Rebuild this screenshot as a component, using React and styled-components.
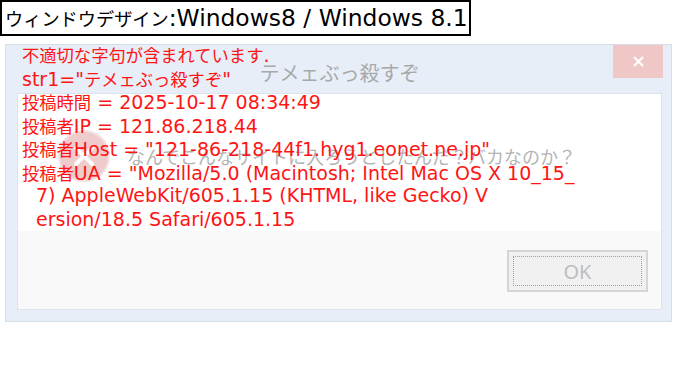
import React from 'react';
import styled, { createGlobalStyle } from 'styled-components';

const GlobalStyle = createGlobalStyle`
  * { box-sizing: border-box; }
  html, body { margin: 0; padding: 0; background: #fff; }
  body { font-family: "DejaVu Sans", "Noto Sans CJK JP", sans-serif; }
`;

const Page = styled.div`
  width: 680px;
  height: 368px;
  overflow: hidden;
  background: #fff;
`;

const Heading = styled.div`
  display: inline-block;
  height: 36px;
  border: 2px solid #000;
  padding: 1px 1px 0 3px;
  line-height: 31px;
  font-family: "DejaVu Sans", "Noto Sans CJK JP", sans-serif;
  font-size: 23.4px;
  color: #000;
  white-space: nowrap;
`;

const HeadingJa = styled.span`
  font-family: "Noto Sans CJK JP", sans-serif;
  font-size: 18.2px;
`;

const Stage = styled.div`
  position: relative;
  padding: 8px 0 0 5px;
`;

const Frame = styled.div`
  width: 667px;
  height: 278px;
  display: flex;
  flex-direction: column;
  background: #e7eef8;
  border: 1px solid #d5dde7;
  padding: 0 9px 11px 11px;
`;

const TitleBar = styled.div`
  height: 48px;
  display: grid;
  grid-template-columns: 1fr auto 1fr;
`;

const Title = styled.div`
  grid-column: 2;
  align-self: center;
  padding-top: 6px;
  font-family: "Noto Sans CJK JP", sans-serif;
  font-size: 20px;
  color: #a9a9a9;
`;

const Close = styled.div`
  grid-column: 3;
  justify-self: end;
  width: 50px;
  height: 33px;
  margin-right: -1px;
  display: flex;
  align-items: center;
  justify-content: center;
  background: #efc7c7;
`;

const Body = styled.div`
  flex: 1;
  display: flex;
  flex-direction: column;
  border: 1px solid #dde3eb;
`;

const Content = styled.div`
  height: 137px;
  display: flex;
  align-items: center;
  gap: 17px;
  padding: 0 0 14px 40px;
  background: #fff;
`;

const Message = styled.div`
  font-family: "Noto Sans CJK JP", sans-serif;
  font-size: 18px;
  color: #b4b4b4;
  white-space: nowrap;
`;

const Footer = styled.div`
  flex: 1;
  display: flex;
  justify-content: flex-end;
  align-items: flex-start;
  padding: 19px 13px 0 0;
  background: #f9f9f9;
`;

const OkButton = styled.div`
  width: 141px;
  height: 42px;
  padding: 4px;
  border: 2px solid #d5d5d5;
  background: #f1f1f1;
`;

const FocusRing = styled.div`
  height: 100%;
  display: flex;
  align-items: center;
  justify-content: center;
  border: 1px dotted #9f9f9f;
  font-family: "Noto Sans", sans-serif;
  font-size: 20px;
  color: #bcbcc4;
`;

const Overlay = styled.div`
  position: absolute;
  top: 7px;
  left: 22px;
  color: #ff1414;
  font-family: "DejaVu Sans", "Noto Sans CJK JP", sans-serif;
  font-size: 19px;
`;

const Line = styled.div`
  height: 23.5px;
  line-height: 23.5px;
  white-space: pre;
  padding-left: ${p => (p.$indent ? '14px' : '0')};
`;

const LineJa = styled.span`
  font-family: "Noto Sans CJK JP", sans-serif;
  font-size: 17.3px;
`;

const cjk = /([\u3000-\u30ff\u4e00-\u9fff\uff00-\uffef]+)/;

function Mixed({ text, as: Ja }) {
  return text.split(cjk).map((part, i) =>
    cjk.test(part) ? <Ja key={i}>{part}</Ja> : part
  );
}

const lines = [
  { text: '不適切な字句が含まれています.' },
  { text: 'str1="テメェぶっ殺すぞ"' },
  { text: '投稿時間 = 2025-10-17 08:34:49' },
  { text: '投稿者IP = 121.86.218.44' },
  { text: '投稿者Host = "121-86-218-44f1.hyg1.eonet.ne.jp"' },
  { text: '投稿者UA = "Mozilla/5.0 (Macintosh; Intel Mac OS X 10_15_' },
  { text: '7) AppleWebKit/605.1.15 (KHTML, like Gecko) V', indent: true },
  { text: 'ersion/18.5 Safari/605.1.15', indent: true },
];

const ErrorIcon = () => (
  <svg width="52" height="52" viewBox="0 0 52 52">
    <circle cx="26" cy="26" r="25" fill="#eecccc" stroke="#f5e0e0" strokeWidth="2" />
    <path d="M18 18 L34 34 M34 18 L18 34" stroke="#fff" strokeWidth="4" strokeLinecap="round" />
  </svg>
);

const CloseIcon = () => (
  <svg width="11" height="11" viewBox="0 0 11 11">
    <path d="M1 1 L10 10 M10 1 L1 10" stroke="#fff" strokeWidth="2" />
  </svg>
);

export default function App() {
  return (
    <Page>
      <GlobalStyle />
      <Heading>
        <Mixed text="ウィンドウデザイン:Windows8 / Windows 8.1" as={HeadingJa} />
      </Heading>
      <Stage>
        <Frame>
          <TitleBar>
            <Title>テメェぶっ殺すぞ</Title>
            <Close><CloseIcon /></Close>
          </TitleBar>
          <Body>
            <Content>
              <ErrorIcon />
              <Message>なんでこんなサイトに入ろうとしたんだ？バカなのか？</Message>
            </Content>
            <Footer>
              <OkButton>
                <FocusRing>OK</FocusRing>
              </OkButton>
            </Footer>
          </Body>
        </Frame>
        <Overlay>
          {lines.map((l, i) => (
            <Line key={i} $indent={l.indent}>
              <Mixed text={l.text} as={LineJa} />
            </Line>
          ))}
        </Overlay>
      </Stage>
    </Page>
  );
}
